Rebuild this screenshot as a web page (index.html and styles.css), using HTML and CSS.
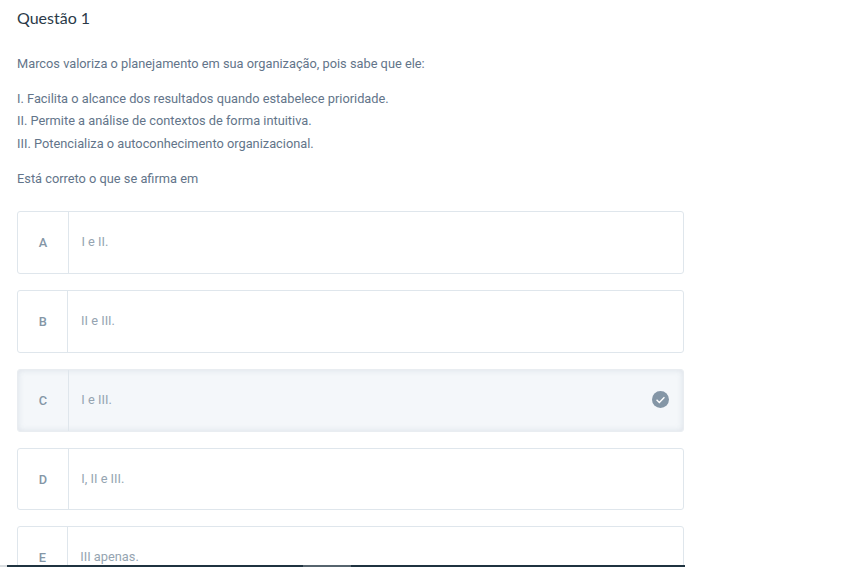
FILE: index.html
```html
<!DOCTYPE html>
<html>

    <head>
        <meta charset="utf-8">
        <title>Questão 1</title>
        <meta name="viewport" content="width=device-width, initial-scale=1">

        <link rel="stylesheet" href="styles.css">
    </head>

    <body>
        <div class="question">
            <h1 class="question-title">Questão 1</h1>

            <p class="statement">Marcos valoriza o planejamento em sua organização, pois sabe que ele:</p>

            <div class="items">
                <p>I. Facilita o alcance dos resultados quando estabelece prioridade.</p>
                <p>II. Permite a análise de contextos de forma intuitiva.</p>
                <p>III. Potencializa o autoconhecimento organizacional.</p>
            </div>

            <p class="statement">Está correto o que se afirma em</p>

            <div class="options">
                <div class="option">
                    <div class="option-letter">A</div>
                    <div class="option-text">I e II.</div>
                </div>
                <div class="option">
                    <div class="option-letter">B</div>
                    <div class="option-text">II e III.</div>
                </div>
                <div class="option selected">
                    <div class="option-letter">C</div>
                    <div class="option-text">I e III.</div>
                    <svg class="check" viewBox="0 0 16 16" width="17" height="17">
                        <circle cx="8" cy="8" r="8" fill="#8496a6"/>
                        <path d="M4.3 8.3l2.6 2.5 4.8-5" fill="none" stroke="#fff" stroke-width="1.3"/>
                    </svg>
                </div>
                <div class="option">
                    <div class="option-letter">D</div>
                    <div class="option-text">I, II e III.</div>
                </div>
                <div class="option">
                    <div class="option-letter">E</div>
                    <div class="option-text">III apenas.</div>
                </div>
            </div>
        </div>

        <div class="bottom-bar">
            <div class="bottom-bar-thumb"></div>
        </div>
    </body>

</html>
```

FILE: styles.css
```css
* {
    font-family: 'Roboto', sans-serif;
    box-sizing: border-box;
}

html, body {
    height: 100%;
    overflow: hidden;
}

body {
    background-color: white;
    margin: 0px;
    padding: 0px;
}

p {
    margin: 0px;
}

.question {
    width: 684px;
    padding-left: 17px;
    padding-top: 7px;
}

.question-title {
    margin: 0px;
    font-family: 'Lato', sans-serif;
    font-size: 16px;
    font-weight: 400;
    line-height: 21px;
    color: #2a3a48;
}

.statement {
    margin-top: 27px;
    font-size: 12.8px;
    line-height: 18px;
    color: #63758a;
}

.items {
    margin-top: 15px;
    font-size: 12.8px;
    line-height: 22.4px;
    color: #63758a;
}

.items + .statement {
    margin-top: 15px;
}

.options {
    margin-top: 23px;
    display: flex;
    flex-direction: column;
    gap: 16px;
}

.option {
    display: flex;
    align-items: center;
    height: 62.8px;
    background-color: white;
    border: 1px solid #dfe6ec;
    border-radius: 3px;
}

.option.selected {
    background-color: #f4f7fa;
    border-color: #e9edf1;
    box-shadow: inset 0 0 6px rgba(120, 140, 160, 0.2);
}

.option-letter {
    display: flex;
    align-items: center;
    height: 100%;
    padding: 0px 20.7px;
    border-right: 1px solid #dfe6ec;
    font-size: 12.8px;
    font-weight: 500;
    color: #8496a6;
}

.option-text {
    flex-grow: 1;
    padding-left: 12.6px;
    padding-bottom: 2px;
    font-size: 12.8px;
    color: #95a4b1;
}

.check {
    margin-right: 14px;
    margin-bottom: 2px;
    flex-shrink: 0;
}

.bottom-bar {
    position: fixed;
    left: 0px;
    bottom: 0px;
    width: 685px;
    height: 2px;
    border-left: 7px solid #d9dde0;
    background-color: #1f3340;
}

.bottom-bar-thumb {
    margin-left: 296px;
    width: 48px;
    height: 2px;
    background-color: #56646e;
}
```
